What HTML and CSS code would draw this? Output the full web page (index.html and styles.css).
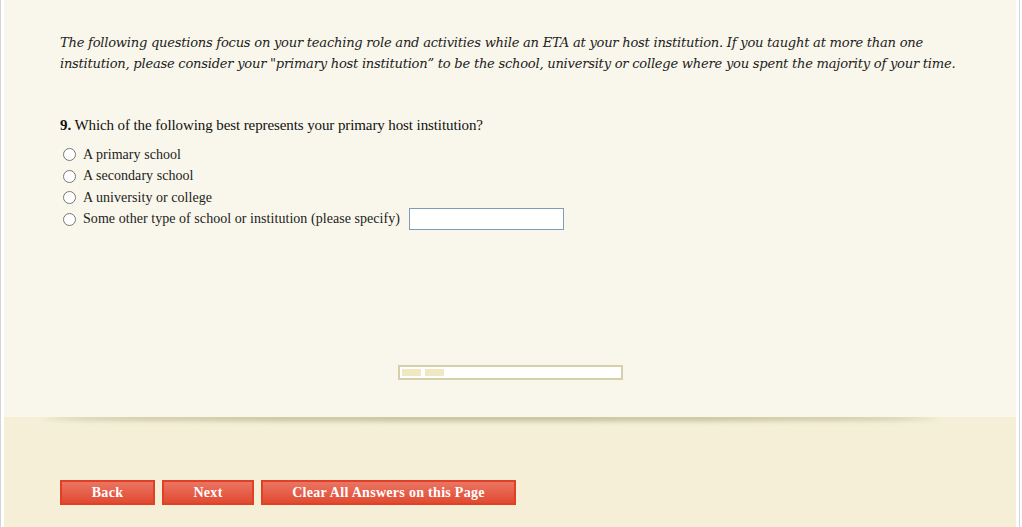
FILE: index.html
```html
<!doctype html>
<html lang="en">
  <head>
    <meta charset="utf-8" />
    <title>ETA Survey</title>
    <link rel="stylesheet" href="styles.css">
  </head>
  <body>
    <div class="survey">
      <div class="survey_body">
        <p class="intro">The following questions focus on your teaching role and activities while an ETA at your host institution. If you taught at more than one institution, please consider your "primary host institution” to be the school, university or college where you spent the majority of your time.</p>

        <div class="question">
          <div class="question_title"><b>9.</b> Which of the following best represents your primary host institution?</div>
          <label class="option"><input type="radio" name="q9"> A primary school</label>
          <label class="option"><input type="radio" name="q9"> A secondary school</label>
          <label class="option"><input type="radio" name="q9"> A university or college</label>
          <label class="option"><input type="radio" name="q9"> Some other type of school or institution (please specify) <input type="text" class="specify"></label>
        </div>

        <div class="progress">
          <span class="progress_step"></span>
          <span class="progress_step"></span>
        </div>
      </div>
      <div class="survey_footer">
        <button class="nav_button back">Back</button>
        <button class="nav_button next">Next</button>
        <button class="nav_button clear">Clear All Answers on this Page</button>
      </div>
    </div>
  </body>
</html>
```

FILE: styles.css
```css
/* whole page */
body{
  margin: 0;
  background: #fff;
  font-family: "Liberation Serif", "Times New Roman", serif;
  color: #111;
}
/* outer frame with grey edges */
.survey{
  width: 1020px;
  border-left: 1px solid #d4d4d4;
  border-right: 1px solid #d4d4d4;
  padding: 0 3px;
  box-sizing: border-box;
  height: 527px;
  display: flex;
  flex-direction: column;
}
/* top cream area */
.survey_body{
  background: #f9f7eb;
  height: 417px;
  padding: 0 40px 0 56px;
  position: relative;
  box-sizing: border-box;
}
.survey_body::after{
  content: "";
  position: absolute;
  left: 40px;
  right: 80px;
  bottom: 0;
  height: 6px;
  border-radius: 50%;
  box-shadow: 0 4px 5px rgba(150, 145, 100, 0.55);
  clip-path: inset(6px -20px -20px -20px);
}
.intro{
  margin: 0;
  padding-top: 32px;
  font-family: "DejaVu Serif", Georgia, serif;
  font-style: italic;
  font-size: 13.1px;
  line-height: 21px;
  letter-spacing: -0.25px;
  color: #222;
}
.question{
  margin-top: 43px;
}
.question_title{
  font-size: 15px;
  letter-spacing: -0.1px;
  margin-bottom: 10px;
}
.option{
  display: flex;
  align-items: center;
  height: 21.5px;
  font-size: 14px;
  letter-spacing: 0.05px;
  color: #222;
}
.option input[type="radio"]{
  margin: 0 7px 0 3px;
  width: 13px;
  height: 13px;
}
.specify{
  margin-left: 9px;
  width: 155px;
  height: 22px;
  box-sizing: border-box;
  border: 1px solid #7f9db9;
  background: #fff;
}
/* page progress bar */
.progress{
  margin: 135px 0 0 338px;
  width: 225px;
  height: 15px;
  box-sizing: border-box;
  border: 2px solid #d6d0aa;
  background: #fff;
  display: flex;
  gap: 4px;
  padding: 2px;
}
.progress_step{
  width: 19px;
  background: #efe8c0;
}
/* bottom button area */
.survey_footer{
  flex: 1;
  background: #f4efd6;
  padding: 63px 0 0 56px;
  display: flex;
  gap: 7px;
  align-items: flex-start;
}
.nav_button{
  height: 25px;
  border: 2px solid #e23f27;
  background: linear-gradient(#ea7563, #e14a31);
  color: #fff;
  font-family: "Liberation Serif", serif;
  font-weight: 700;
  font-size: 14px;
  padding: 0;
  letter-spacing: 0.3px;
}
.back{ width: 95px; }
.next{ width: 92px; }
.clear{ width: 255px; }
```
